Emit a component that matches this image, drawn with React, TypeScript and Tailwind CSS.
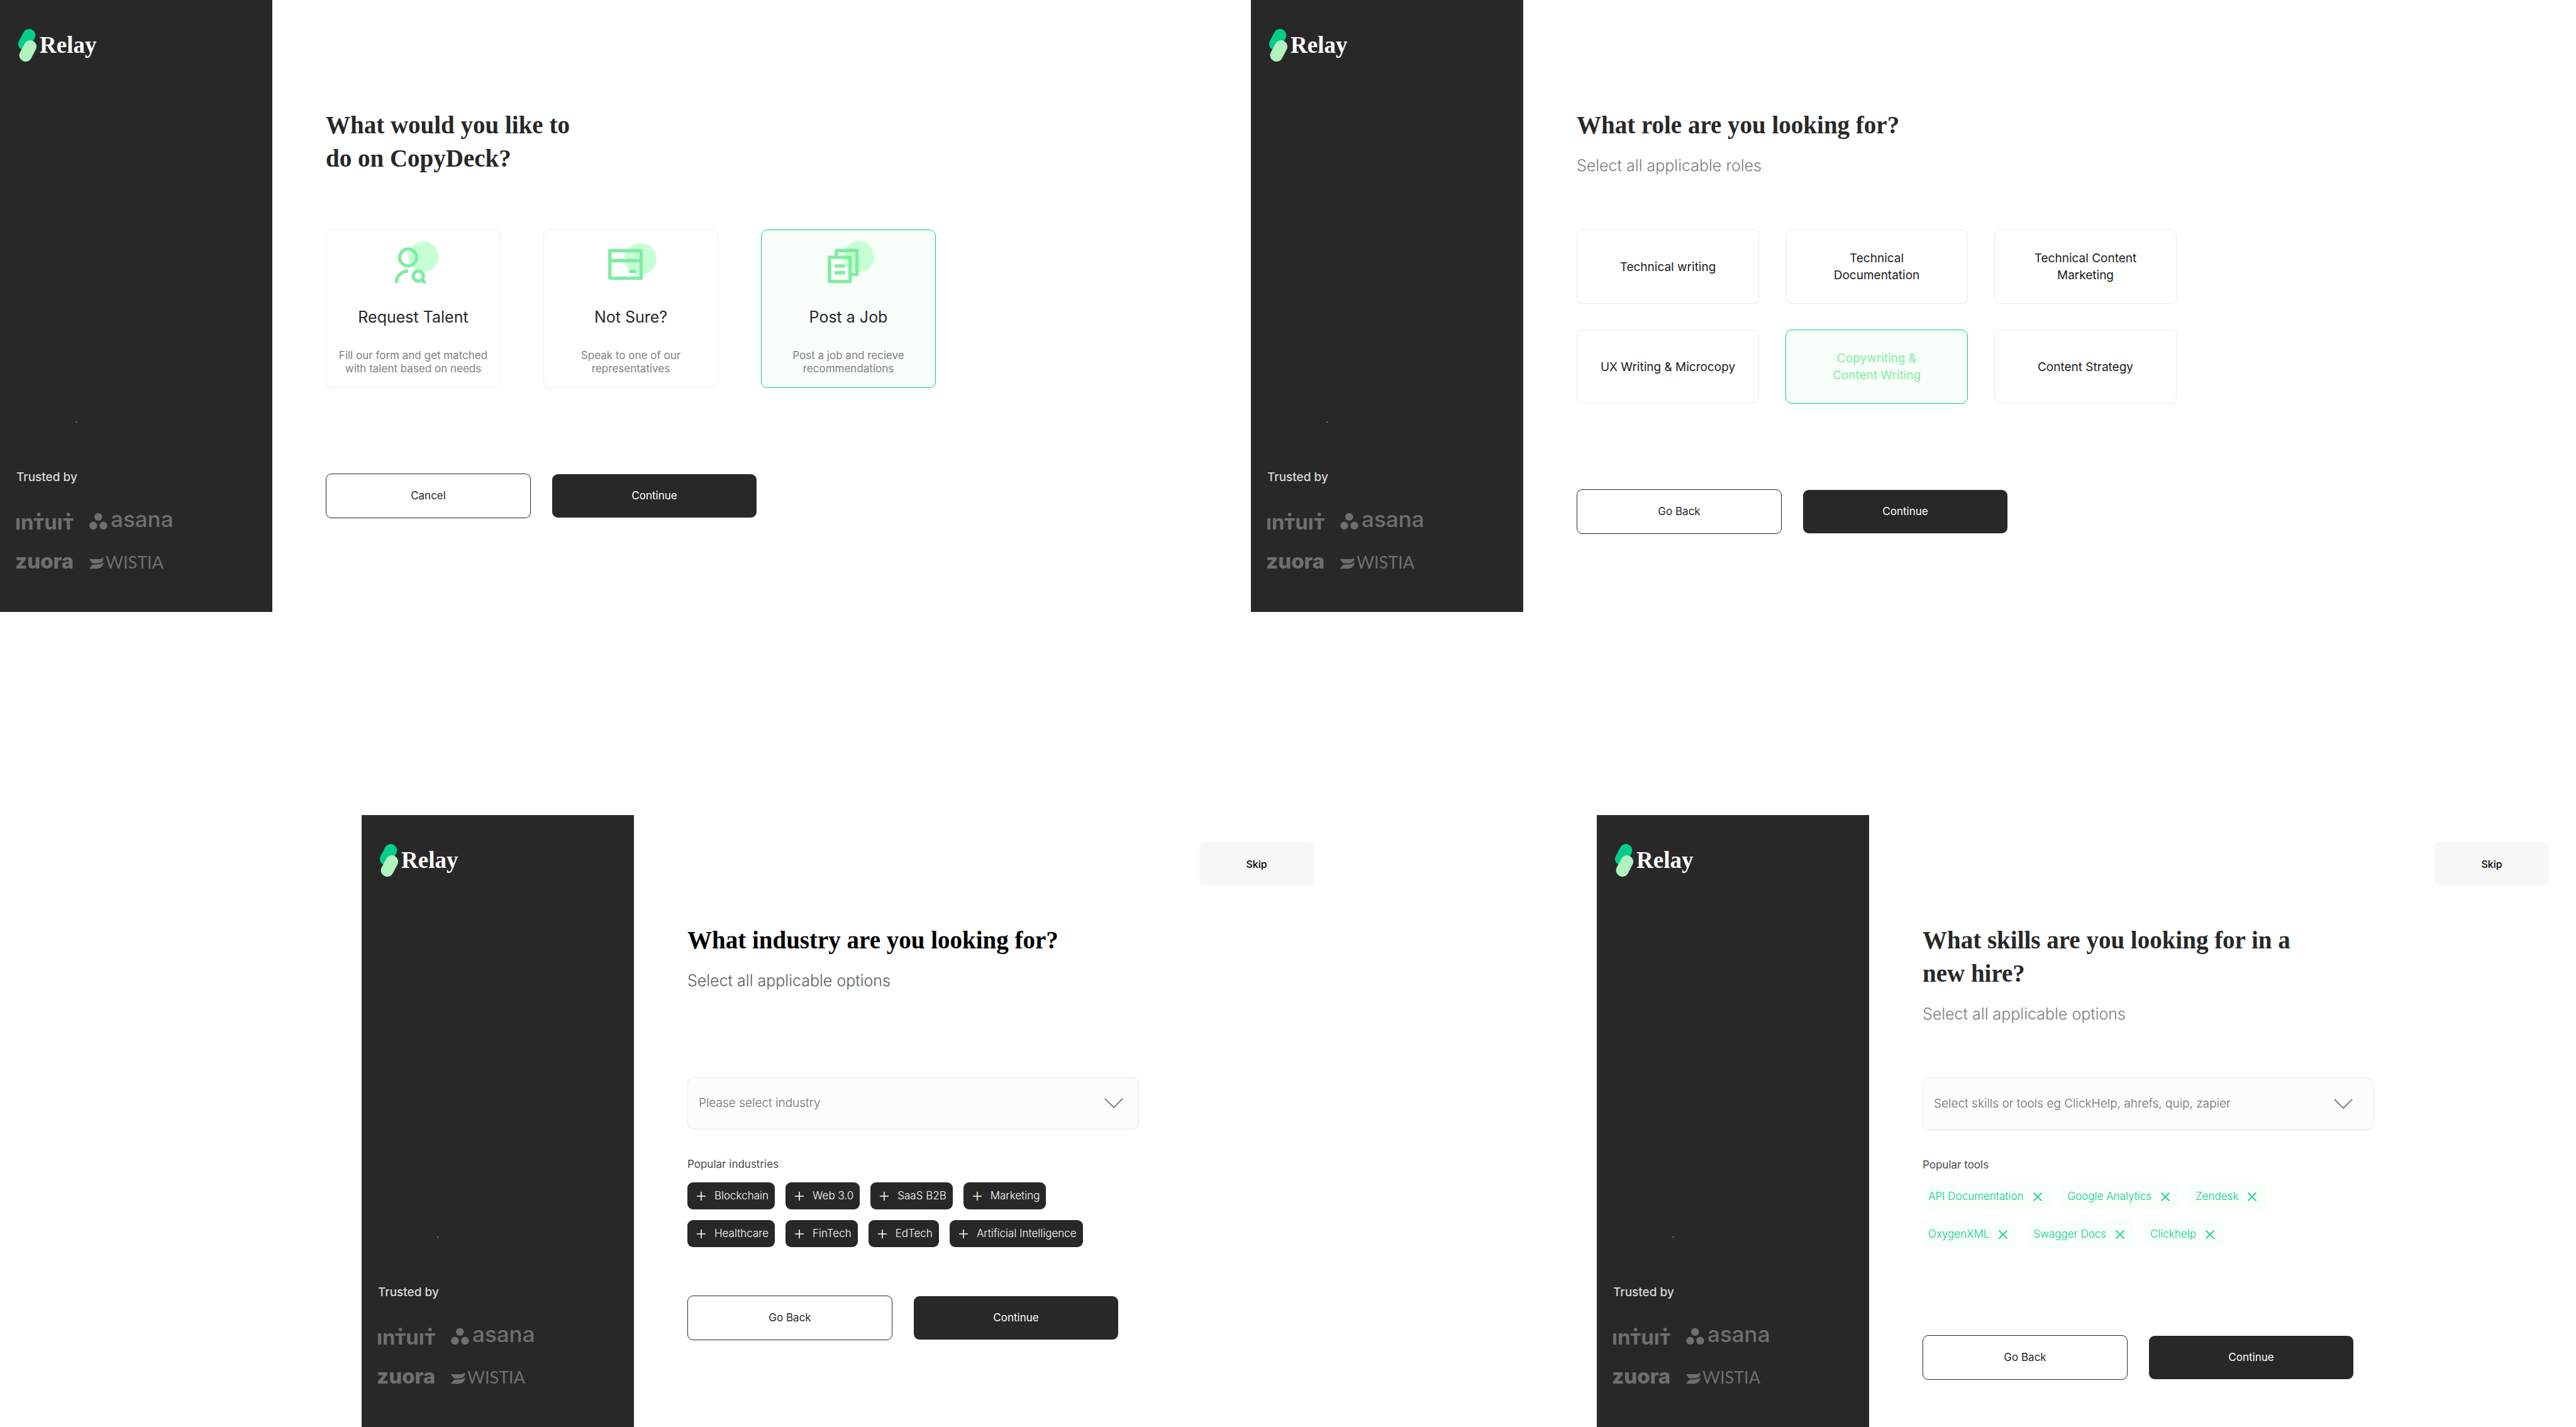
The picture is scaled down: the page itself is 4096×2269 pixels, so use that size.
import type { ReactNode } from "react";
import { clsx } from "clsx";

const HEADING = "font-['Liberation_Serif',serif] text-[39px] leading-[53px] font-bold whitespace-pre-line";

function RelayLogo() {
  return (
    <a href="#home" className="flex items-center gap-[5px] px-[29px]">
      <svg viewBox="42 48 159 285" className="h-[52px] w-[29px]" aria-hidden="true" strokeWidth="110" strokeLinecap="round">
        <line x1="137" y1="103" x2="97" y2="179" stroke="#04ce8a" />
        <line x1="146" y1="202" x2="106" y2="278" stroke="#b0f3bf" />
      </svg>
      <span className="font-['Liberation_Serif',serif] text-[37px] leading-[52px] font-bold text-white">Relay</span>
    </a>
  );
}

function IntuitLogo() {
  return (
    <svg viewBox="0 0 90 27" className="h-[27px] w-[90px] overflow-visible font-[Inter,sans-serif] text-[33px] font-bold" fill="currentColor" role="img" aria-label="Intuit">
      <text x="-2" y="27">ın</text>
      <text x="35.7" y="27" textAnchor="middle">т</text>
      <text x="59" y="27" textAnchor="middle">uı</text>
      <text x="82.7" y="27" textAnchor="middle">т</text>
      <circle cx="35.7" cy="3" r="2.8" />
      <circle cx="82.7" cy="3" r="2.8" />
    </svg>
  );
}

function AsanaLogo() {
  return (
    <svg viewBox="0 0 134 27" className="h-[27px] w-[134px] overflow-visible font-[Inter,sans-serif] text-[35px] font-medium" fill="currentColor" role="img" aria-label="Asana">
      <circle cx="14.3" cy="6.9" r="6.2" />
      <circle cx="6.4" cy="20.8" r="6.2" />
      <circle cx="22.4" cy="20.8" r="6.2" />
      <text x="34" y="23">asana</text>
    </svg>
  );
}

function ZuoraLogo() {
  return (
    <svg viewBox="0 0 90 20" className="h-5 w-[90px] overflow-visible font-[Inter,sans-serif] text-[33px] font-extrabold" fill="currentColor" role="img" aria-label="Zuora">
      <text x="-2" y="19">zuora</text>
    </svg>
  );
}

function WistiaLogo() {
  return (
    <svg viewBox="0 0 120 20" className="h-5 w-[120px] overflow-visible font-[Lato,sans-serif] text-[27px]" fill="currentColor" role="img" aria-label="Wistia">
      <g transform="translate(-120.4 -84.1) scale(0.1803)">
        <path d="M666 489H758C778 488 788 482 789 474C797 495 788 522 745 526H708C694 526 690 520 685 513Z" />
        <path d="M666 573L690 545C696 538 702 537 712 537L745 535C775 531 790 522 793 513C795 550 770 573 722 573Z" />
      </g>
      <text x="26" y="19">WISTIA</text>
    </svg>
  );
}

function Sidebar() {
  return (
    <aside className="flex w-[433px] shrink-0 flex-col bg-[#282828] pt-[46px] pb-[68px]">
      <RelayLogo />
      <div className="mt-auto px-[26px]">
        <p className="mb-[71px] pl-[94px] text-[4px] leading-[4px] text-[#b0b0b0]">®</p>
        <p className="text-[19px] leading-7 font-medium text-[#d9d9d9]">Trusted by</p>
        <div className="mt-[42px] grid w-max grid-cols-[auto_auto] gap-x-[26px] gap-y-[43px] text-[#6f6f6f]">
          <IntuitLogo />
          <AsanaLogo />
          <ZuoraLogo />
          <WistiaLogo />
        </div>
      </div>
    </aside>
  );
}

function Screen({ skip = false, children }: { skip?: boolean; children: ReactNode }) {
  return (
    <section className="flex min-h-[973px] min-w-0 flex-1 bg-white">
      <Sidebar />
      <div className="flex min-w-0 flex-1 flex-col">
        <header className="flex h-[172px] shrink-0 items-start justify-end px-[43px] pt-[43px]">
          {skip && (
            <button type="button" className="h-[69px] w-[182px] rounded-lg bg-[#f7f7f7] text-base font-medium text-black">
              Skip
            </button>
          )}
        </header>
        <div className="pl-[85px]">{children}</div>
      </div>
    </section>
  );
}

function Actions({ back, className }: { back: string; className: string }) {
  return (
    <div className={clsx("flex items-center gap-[34px] text-[17px]", className)}>
      <button type="button" className="h-[71px] w-[326px] rounded-[9px] border border-[#282828] text-[#282828]">
        {back}
      </button>
      <button type="button" className="h-[69px] w-[325px] rounded-[9px] bg-[#282828] text-white">
        Continue
      </button>
    </div>
  );
}

function IconFrame({ viewBox, children }: { viewBox: string; children: ReactNode }) {
  return (
    <svg viewBox={viewBox} className="h-[70px] w-[82px]" fill="none" stroke="#7feca3" strokeWidth="10" aria-hidden="true">
      {children}
    </svg>
  );
}

const requestIcon = (
  <IconFrame viewBox="20 18 152 130">
    <circle cx="126" cy="65" r="45" fill="#c5ffd3" stroke="none" />
    <circle cx="81" cy="67" r="25" />
    <path d="M46 142A35 35 0 0 1 81 107" />
    <circle cx="111" cy="122" r="15" />
    <path d="M122 133L132 143" />
  </IconFrame>
);

const unsureIcon = (
  <IconFrame viewBox="0 18 152 130">
    <circle cx="105" cy="71.5" r="47" fill="#c5ffd3" stroke="none" />
    <rect x="14.2" y="46.7" width="92.6" height="81.6" rx="1" />
    <path d="M10 76.5H108M71 108H92" />
  </IconFrame>
);

const postIcon = (
  <IconFrame viewBox="30 18 152 130">
    <circle cx="136.7" cy="64.5" r="45.5" fill="#c5ffd3" stroke="none" />
    <path d="M70.5 62V46.3H131.3V117.5H115" strokeLinejoin="round" />
    <path d="M111 61.5V138H50V66.5H116" strokeLinejoin="round" />
    <path d="M65.5 92H96M65.5 112H96" />
  </IconFrame>
);

const goals = [
  { title: "Request Talent", text: "Fill our form and get matched\nwith talent based on needs", icon: requestIcon, on: false },
  { title: "Not Sure?", text: "Speak to one of our\nrepresentatives", icon: unsureIcon, on: false },
  { title: "Post a Job", text: "Post a job and recieve\nrecommendations", icon: postIcon, on: true },
];

const roles = [
  { name: "Technical writing", on: false },
  { name: "Technical\nDocumentation", on: false },
  { name: "Technical Content\nMarketing", on: false },
  { name: "UX Writing & Microcopy", on: false },
  { name: "Copywriting &\nContent Writing", on: true },
  { name: "Content Strategy", on: false },
];

const industries = [
  ["Blockchain", "Web 3.0", "SaaS B2B", "Marketing"],
  ["Healthcare", "FinTech", "EdTech", "Artificial Intelligence"],
];

const tools = [
  ["API Documentation", "Google Analytics", "Zendesk"],
  ["OxygenXML", "Swagger Docs", "Clickhelp"],
];

function Dropdown({ label, placeholder, className, chevron }: { label: string; placeholder: string; className: string; chevron: string }) {
  return (
    <div className={clsx("relative w-[718px]", className)}>
      <select aria-label={label} className="h-[83px] w-full appearance-none rounded-[10px] border border-[#e8e8e8] bg-[#fcfcfc] pr-[70px] pl-[17px] text-[19px] font-light text-[#707070]">
        <option>{placeholder}</option>
      </select>
      <svg viewBox="0 0 30 16" className={clsx("pointer-events-none absolute top-[33px] h-4 w-[30px]", chevron)} fill="none" stroke="#808080" strokeWidth="2" aria-hidden="true">
        <path d="M1 1L15 15L29 1" />
      </svg>
    </div>
  );
}

function GoalScreen() {
  return (
    <Screen>
      <h1 className={clsx(HEADING, "text-[#282828]")}>{"What would you like to\ndo on CopyDeck?"}</h1>
      <div className="mt-[87px] flex gap-[68px]">
        {goals.map((g) => (
          <button
            key={g.title}
            type="button"
            aria-pressed={g.on}
            className={clsx(
              "flex h-[252px] w-[278px] flex-col items-center rounded-[10px] border pt-[17px]",
              g.on ? "border-[#04cd8a] bg-[#f8fff9]" : "border-[#e8e8e8] bg-white",
            )}
          >
            {g.icon}
            <span className="mt-9 text-[25px] leading-[30px] text-[#282828]">{g.title}</span>
            <span className="mt-9 text-[17px] leading-[21px] whitespace-pre-line text-[#808080]">{g.text}</span>
          </button>
        ))}
      </div>
      <Actions back="Cancel" className="mt-[136px]" />
    </Screen>
  );
}

function RoleScreen() {
  return (
    <Screen>
      <h1 className={clsx(HEADING, "text-[#282828]")}>What role are you looking for?</h1>
      <p className="mt-5 text-[25px] leading-9 font-light text-[#7e7e7e]">Select all applicable roles</p>
      <div className="mt-[84px] grid w-max grid-cols-3 gap-x-[42px] gap-y-[41px]">
        {roles.map((r) => (
          <button
            key={r.name}
            type="button"
            aria-pressed={r.on}
            className={clsx(
              "h-[118px] w-[290px] rounded-[10px] border text-[19px] leading-[27px] whitespace-pre-line",
              r.on ? "border-[#04cd8a] bg-[#f8fff9] text-[#7feca3]" : "border-[#e8e8e8] bg-white text-[#1c1c1c]",
            )}
          >
            {r.name}
          </button>
        ))}
      </div>
      <Actions back="Go Back" className="mt-[136px]" />
    </Screen>
  );
}

function IndustryScreen() {
  return (
    <Screen skip>
      <h1 className={clsx(HEADING, "text-black")}>What industry are you looking for?</h1>
      <p className="mt-5 text-[25px] leading-9 font-light text-[#5c5c5c]">Select all applicable options</p>
      <Dropdown label="Industry" placeholder="Please select industry" className="mt-[136px]" chevron="right-[25px]" />
      <p className="mt-[42px] text-[17px] leading-[26px] text-[#4a4a4a]">Popular industries</p>
      <div className="mt-4 flex flex-col gap-[17px]">
        {industries.map((row) => (
          <div key={row[0]} className="flex gap-[17px]">
            {row.map((name) => (
              <button key={name} type="button" className="flex h-[43px] items-center gap-[14px] rounded-[9px] bg-[#282828] pr-[10px] pl-[15px] text-[17px] font-light text-white">
                <svg viewBox="0 0 14 14" className="size-[14px]" stroke="currentColor" strokeWidth="1.6" aria-hidden="true">
                  <path d="M7 0V14M0 7H14" />
                </svg>
                {name}
              </button>
            ))}
          </div>
        ))}
      </div>
      <Actions back="Go Back" className="mt-[77px]" />
    </Screen>
  );
}

function SkillScreen() {
  return (
    <Screen skip>
      <h1 className={clsx(HEADING, "text-[#282828]")}>{"What skills are you looking for in a\nnew hire?"}</h1>
      <p className="mt-5 text-[25px] leading-9 font-light text-[#7e7e7e]">Select all applicable options</p>
      <Dropdown
        label="Skills or tools"
        placeholder="Select skills or tools eg ClickHelp, ahrefs, quip, zapier"
        className="mt-[84px]"
        chevron="right-[34px]"
      />
      <p className="mt-[42px] text-[17px] leading-[26px] text-[#4a4a4a]">Popular tools</p>
      <div className="mt-4 flex flex-col gap-[17px]">
        {tools.map((row) => (
          <div key={row[0]} className="flex gap-[17px]">
            {row.map((name) => (
              <button key={name} type="button" className="flex h-[43px] items-center gap-[15px] rounded-[9px] bg-[#f8fff9] pr-[15px] pl-[9px] text-[17px] font-light text-[#04cd8a]">
                {name}
                <svg viewBox="0 0 14 14" className="size-[14px]" stroke="currentColor" strokeWidth="1.6" aria-hidden="true">
                  <path d="M0.5 0.5L13.5 13.5M13.5 0.5L0.5 13.5" />
                </svg>
              </button>
            ))}
          </div>
        ))}
      </div>
      <Actions back="Go Back" className="mt-[139px]" />
    </Screen>
  );
}

export default function App() {
  return (
    <main className="flex flex-col gap-[323px] bg-white font-[Inter,sans-serif]">
      <div className="flex gap-[432px] pr-[550px]">
        <GoalScreen />
        <RoleScreen />
      </div>
      <div className="flex gap-[407px] pl-[575px]">
        <IndustryScreen />
        <SkillScreen />
      </div>
    </main>
  );
}
